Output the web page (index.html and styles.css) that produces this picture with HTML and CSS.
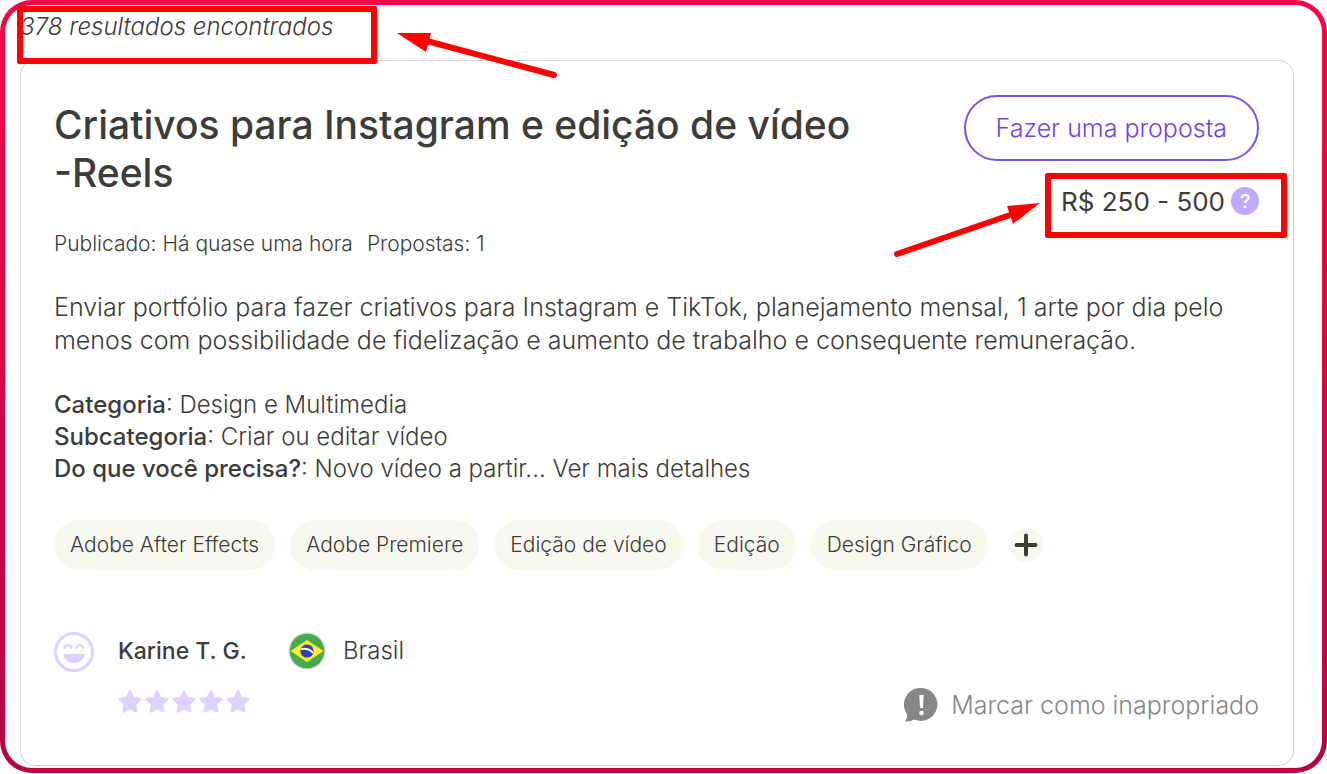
FILE: index.html
```html
<!DOCTYPE html>
<html lang="pt-BR">
<head>
    <meta charset="UTF-8">
    <meta name="viewport" content="width=device-width, initial-scale=1.0">
    <title>Projetos</title>
    <link rel="stylesheet" href="styles.css">
</head>

<body>
    <svg class="sprite" aria-hidden="true">
        <symbol id="star" viewBox="0 0 24 24">
            <path d="M12 1.6l3.1 6.6 7.2 1-5.3 5 1.3 7.2-6.3-3.4-6.3 3.4 1.3-7.2-5.3-5 7.2-1z" fill="#ddd2ff" stroke="#ddd2ff" stroke-width="2.4" stroke-linejoin="round"/>
        </symbol>
    </svg>

    <div class="frame">
        <main class="page">
            <p class="results-count">378 resultados encontrados</p>
            <span class="mark mark-count"></span>
            <svg class="arrow arrow-count" width="164" height="50" viewBox="0 0 164 50" aria-hidden="true">
                <path d="M26 10L157 45" stroke="#ff0000" stroke-width="6" stroke-linecap="round"/>
                <path d="M0 3L34 3L29 22z" fill="#ff0000"/>
            </svg>

            <article class="card">
                <header class="card-header">
                    <h1>Criativos para Instagram e edição de vídeo <span class="nowrap">-Reels</span></h1>
                    <div class="actions">
                        <button class="btn-proposal" type="button">Fazer uma proposta</button>
                        <div class="price">
                            <span>R$ 250 - 500</span>
                            <button class="help" type="button" aria-label="Ajuda">
                                <svg width="28" height="28" viewBox="0 0 28 28">
                                    <circle cx="14" cy="14" r="14" fill="#bfa8ff"/>
                                    <path d="M10.7 11.2c0-4.6 7-4.3 7-.6 0 2.6-3.6 2.7-3.6 5.4" fill="none" stroke="#fff" stroke-width="2.2"/>
                                    <circle cx="14.1" cy="19.7" r="1.5" fill="#fff"/>
                                </svg>
                            </button>
                            <span class="mark mark-price"></span>
                            <svg class="arrow arrow-price" width="150" height="60" viewBox="0 0 150 60" aria-hidden="true">
                                <path d="M4 53L120 13" stroke="#ff0000" stroke-width="6" stroke-linecap="round"/>
                                <path d="M147 2L114 5L120 23z" fill="#ff0000"/>
                            </svg>
                        </div>
                    </div>
                </header>

                <p class="meta"><span>Publicado: Há quase uma hora</span><span>Propostas: 1</span></p>

                <p class="description">Enviar portfólio para fazer criativos para Instagram e TikTok, planejamento mensal, 1 arte por dia pelo menos com possibilidade de fidelização e aumento de trabalho e consequente remuneração.</p>

                <div class="details">
                    <p><strong>Categoria</strong>: Design e Multimedia</p>
                    <p><strong>Subcategoria</strong>: Criar ou editar vídeo</p>
                    <p><strong>Do que você precisa?</strong>: Novo vídeo a partir... <a href="#">Ver mais detalhes</a></p>
                </div>

                <div class="tags">
                    <a class="tag" href="#">Adobe After Effects</a>
                    <a class="tag" href="#">Adobe Premiere</a>
                    <a class="tag" href="#">Edição de vídeo</a>
                    <a class="tag" href="#">Edição</a>
                    <a class="tag" href="#">Design Gráfico</a>
                    <button class="more" type="button" aria-label="Mais habilidades">
                        <svg width="34" height="34" viewBox="0 0 34 34">
                            <path d="M17 7.500v19M7.500 17h19" stroke="#3c3c3b" stroke-width="4" stroke-linecap="round"/>
                        </svg>
                    </button>
                </div>

                <footer class="card-footer">
                    <svg class="avatar" width="40" height="40" viewBox="0 0 40 40" aria-hidden="true">
                        <circle cx="20" cy="20" r="18.5" fill="none" stroke="#ddd2ff" stroke-width="3"/>
                        <path d="M10.500 16c.6-4 6.400-4 7 0M22.500 16c.6-4 6.400-4 7 0" fill="none" stroke="#ddd2ff" stroke-width="2.200" stroke-linecap="round"/>
                        <path d="M9.500 22h21c0 12-21 12-21 0z" fill="#ddd2ff"/>
                    </svg>
                    <div class="client">
                        <strong>Karine T. G.</strong>
                        <div class="stars" role="img" aria-label="Sem avaliações">
                            <svg width="24" height="24"><use href="#star"/></svg>
                            <svg width="24" height="24"><use href="#star"/></svg>
                            <svg width="24" height="24"><use href="#star"/></svg>
                            <svg width="24" height="24"><use href="#star"/></svg>
                            <svg width="24" height="24"><use href="#star"/></svg>
                        </div>
                    </div>
                    <div class="country">
                        <svg width="38" height="38" viewBox="0 0 38 38" aria-hidden="true">
                            <circle cx="19" cy="19" r="18.500" fill="#d9d4da"/>
                            <circle cx="19" cy="19" r="17.300" fill="#46ac4b"/>
                            <path d="M2.500 19L19 8l16.500 11L19 30z" fill="#ffeb36"/>
                            <circle cx="19" cy="19" r="6.600" fill="#2f3fb5"/>
                            <path d="M13 17.200c4-1 9 .3 12 3.600" fill="none" stroke="#fff" stroke-width="1.800"/>
                        </svg>
                        <span>Brasil</span>
                    </div>
                    <a class="report" href="#">
                        <svg width="34" height="34" viewBox="0 0 34 34" aria-hidden="true">
                            <path d="M17.500 0a16.500 16.500 0 1 1-7.500 31.500C7.500 33 4.500 33.600 1 33.300c1.800-2.300 2.300-4.300 2-7.300A16.500 16.500 0 0 1 17.500 0z" fill="#878786"/>
                            <path d="M15.300 7h4.400l-.7 13h-3z" fill="#fff"/>
                            <circle cx="17.500" cy="25" r="2.300" fill="#fff"/>
                        </svg>
                        <span>Marcar como inapropriado</span>
                    </a>
                </footer>
            </article>
        </main>
    </div>
</body>
</html>
```

FILE: styles.css
```css
* {
    box-sizing: border-box;
}

body {
    margin: 0;
    font-family: Inter, "Open Sans", sans-serif;
    font-size: 24px;
    font-weight: 300;
    color: #3c3c3b;
    background-color: white;
}

h1, p {
    margin: 0;
}

strong {
    font-weight: 500;
}

a {
    color: inherit;
    text-decoration: none;
}

button {
    padding: 0;
    border: none;
    background: none;
    font: inherit;
    cursor: pointer;
}

svg {
    display: block;
    flex: none;
}

.sprite {
    position: absolute;
    width: 0;
    height: 0;
}

.nowrap {
    white-space: nowrap;
}

/* Gradient frame */
.frame {
    padding: 5px;
    border-radius: 32px;
    background: linear-gradient(#f50546, #b80345);
}

.page {
    position: relative;
    padding: 4px 28px 2px 15px;
    border-radius: 27px;
    background-color: white;
}

.results-count {
    line-height: 36px;
    margin-bottom: 15px;
    font-style: italic;
}

/* Card */
.card {
    padding: 34px 34px 41px 33px;
    border: 1px solid #d2d2d2;
    border-radius: 15px;
}

.card-header {
    display: flex;
    justify-content: space-between;
    gap: 60px;
}

h1 {
    padding-top: 6px;
    font-size: 39px;
    font-weight: 500;
    line-height: 48px;
}

.actions {
    display: flex;
    flex: none;
    flex-direction: column;
    align-items: flex-end;
    gap: 26px;
}

.btn-proposal {
    height: 66px;
    padding: 0 30px;
    border: 2px solid #7b52e6;
    border-radius: 33px;
    color: #7541e8;
    font-size: 25px;
}

.price {
    position: relative;
    display: flex;
    align-items: center;
    gap: 6px;
    height: 28px;
    font-size: 26px;
    font-weight: 400;
}

.meta {
    display: flex;
    gap: 14px;
    margin-top: 14px;
    font-size: 21px;
    line-height: 30px;
}

.description {
    margin-top: 32px;
    font-size: 25px;
    line-height: 33px;
}

.details {
    margin-top: 32px;
    line-height: 32px;
}

.tags {
    display: flex;
    flex-wrap: wrap;
    align-items: center;
    gap: 15px;
    margin-top: 35px;
}

.tag {
    padding: 0 16px;
    border-radius: 25px;
    background-color: #f8f8ee;
    font-size: 21px;
    line-height: 50px;
}

.more {
    margin-left: 6px;
    border-radius: 50%;
    background-color: #f8f8ee;
}

.card-footer {
    display: flex;
    align-items: flex-start;
    margin-top: 62px;
    line-height: 38px;
}

.client {
    margin: 0 38px 0 24px;
    padding-bottom: 10px;
    font-size: 23px;
}

.stars {
    display: flex;
    gap: 3px;
    margin-top: 20px;
}

.country {
    display: flex;
    gap: 17px;
}

.report {
    display: flex;
    align-items: center;
    align-self: flex-end;
    gap: 13px;
    margin-left: auto;
    color: #878786;
    font-size: 25px;
}

/* Red annotations */
.mark {
    position: absolute;
    border: 6px solid #ff0000;
    border-radius: 2px;
}

.mark-count {
    top: 1px;
    left: 12px;
    width: 360px;
    height: 58px;
}

.mark-price {
    top: -14px;
    right: -28px;
    width: 242px;
    height: 65px;
}

.arrow {
    position: absolute;
}

.arrow-count {
    top: 25px;
    left: 392px;
}

.arrow-price {
    top: 14px;
    right: 216px;
}
```
